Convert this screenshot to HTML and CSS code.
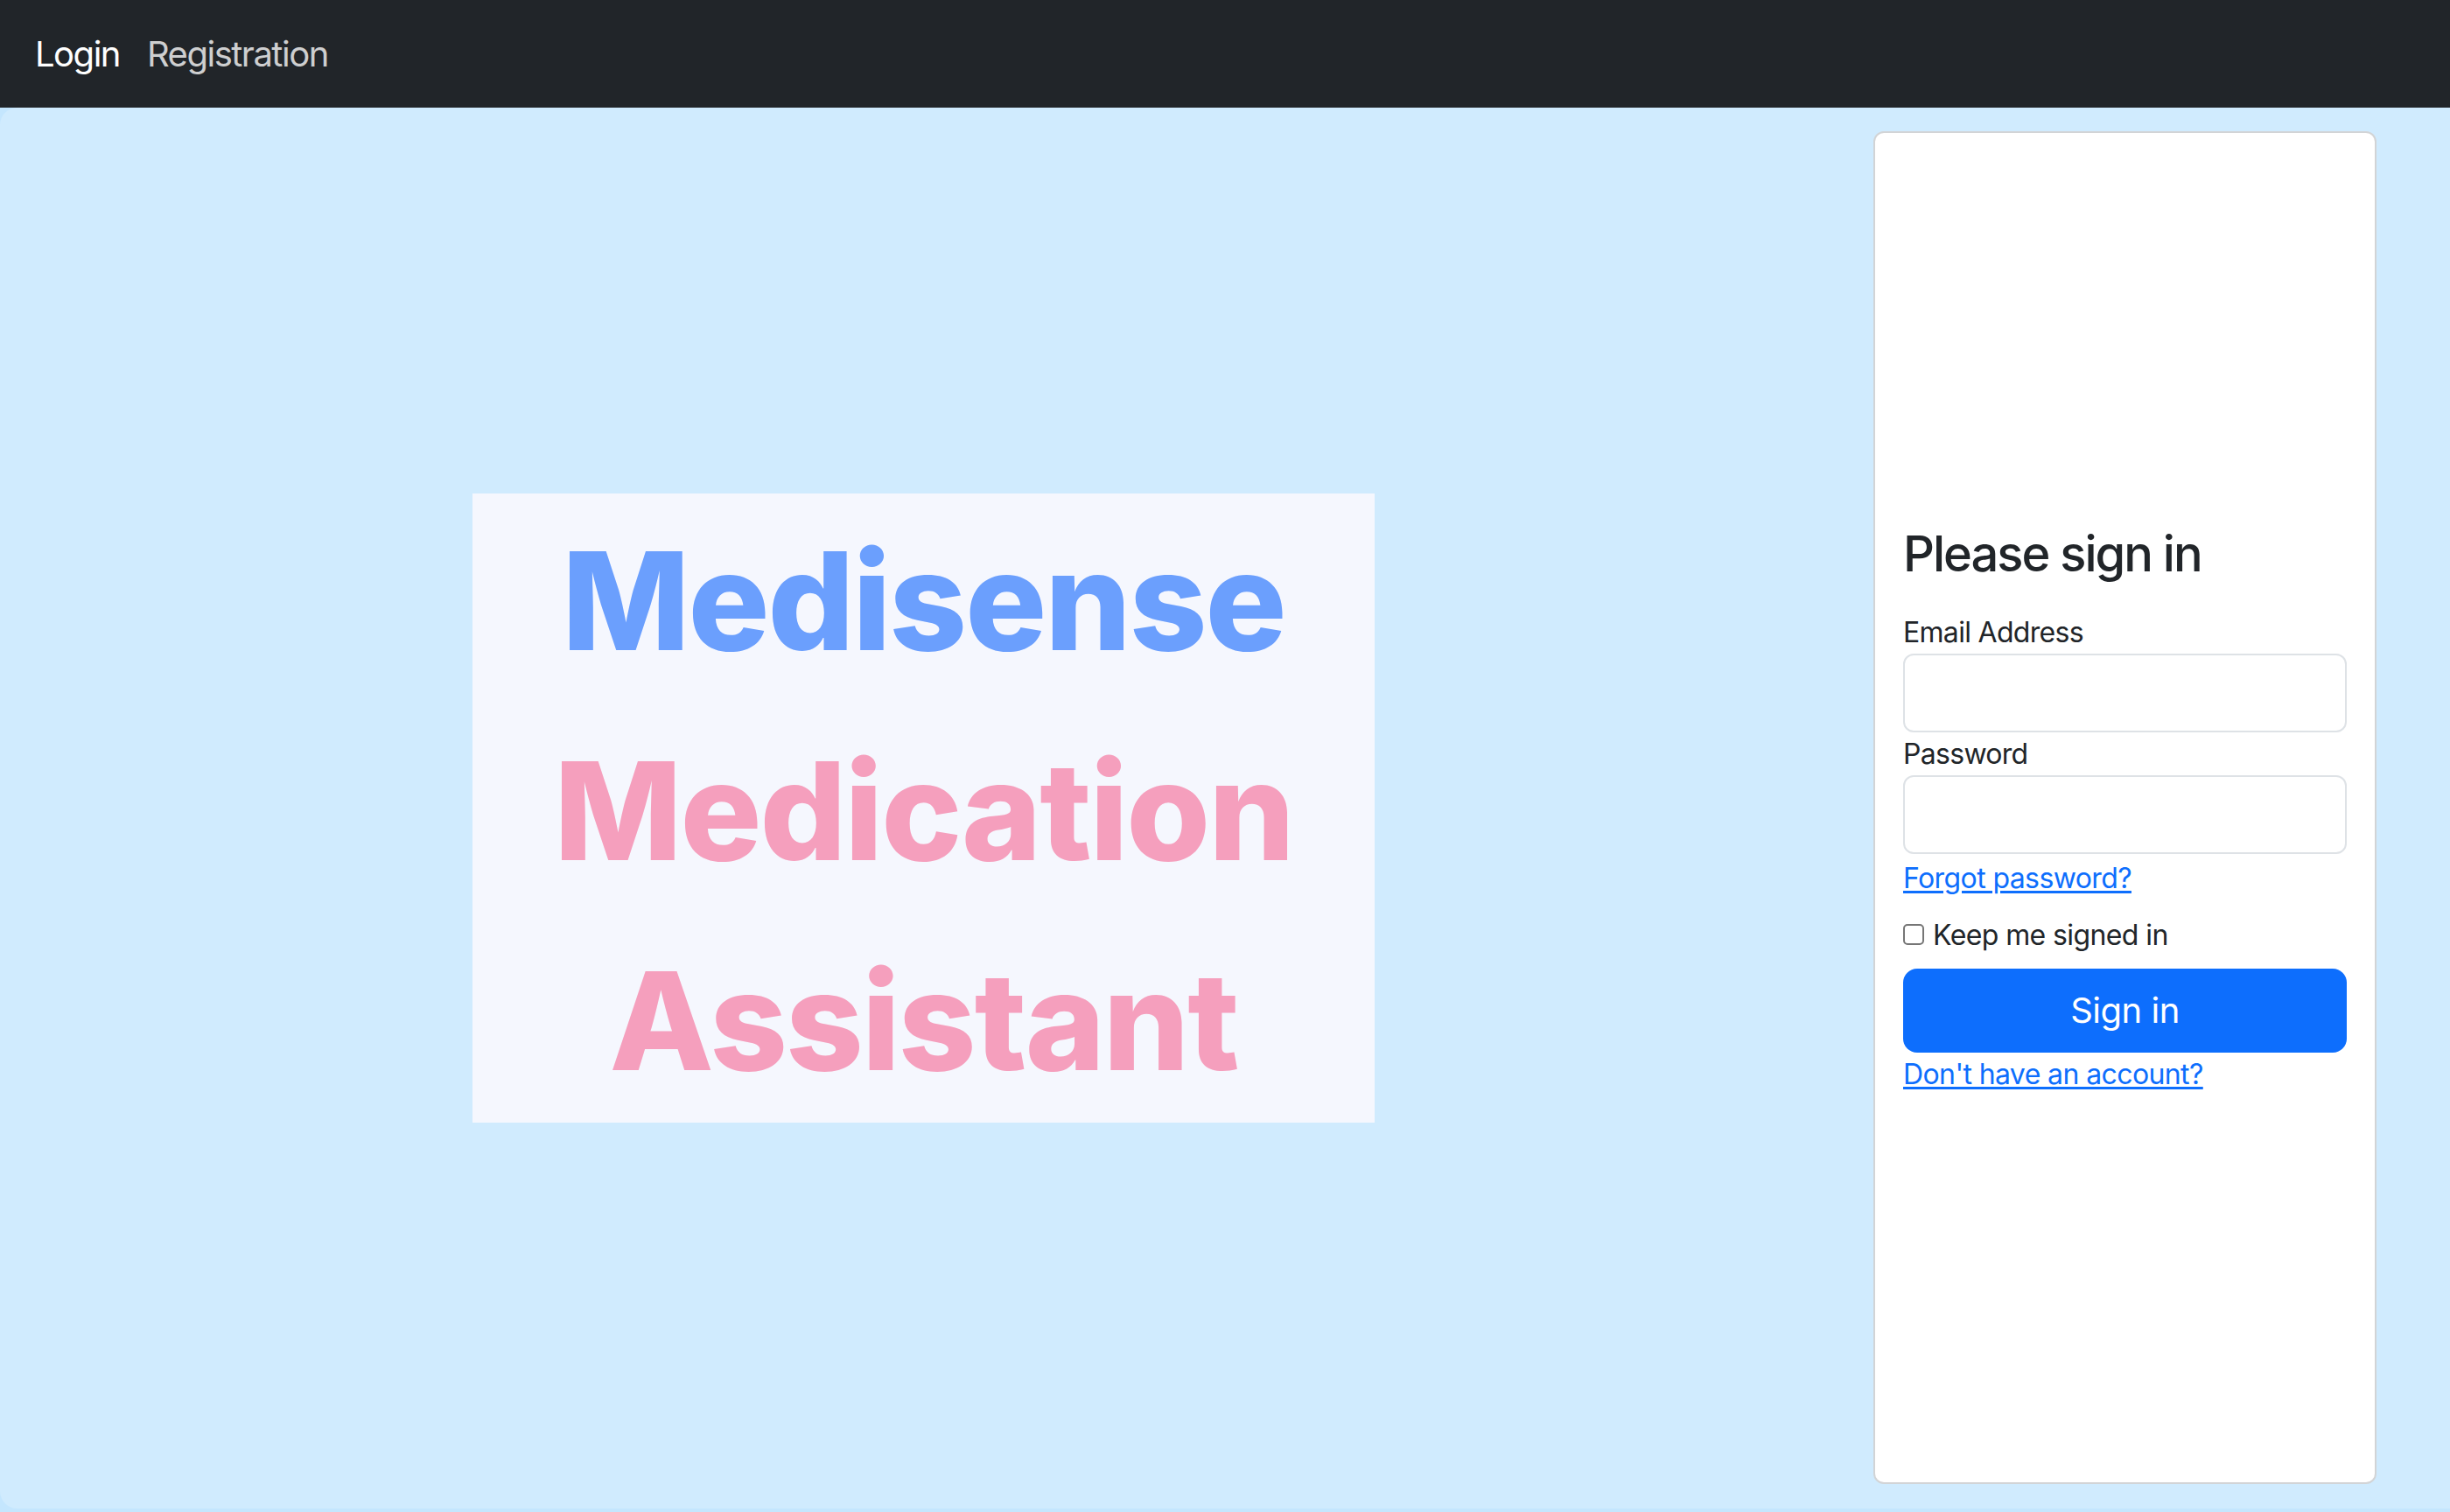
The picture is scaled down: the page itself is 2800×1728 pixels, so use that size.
FILE: index.html
```html
<!DOCTYPE html>
<html lang="en">
<head>
<meta charset="utf-8">
<title>Medisense - Login</title>
<link rel="stylesheet" href="styles.css">
</head>
<body>
<nav class="navbar">
  <a class="nav-link active" href="#">Login</a>
  <a class="nav-link" href="#">Registration</a>
</nav>
<main class="main">
  <section class="hero">
    <div class="logo">
      <div class="logo-line blue">Medisense</div>
      <div class="logo-line pink">Medication</div>
      <div class="logo-line pink">Assistant</div>
    </div>
  </section>
  <aside class="card">
    <form class="signin">
      <h3 class="title">Please sign in</h3>
      <label class="label" for="email">Email Address</label>
      <input class="input" id="email" type="email">
      <label class="label" for="password">Password</label>
      <input class="input" id="password" type="password">
      <a class="link forgot" href="#">Forgot password?</a>
      <div class="check-row">
        <input class="check" id="keep" type="checkbox">
        <label class="check-label" for="keep">Keep me signed in</label>
      </div>
      <button class="btn" type="button">Sign in</button>
      <a class="link signup" href="#">Don't have an account?</a>
    </form>
  </aside>
</main>
</body>
</html>
```
FILE: styles.css
```css
* { box-sizing: border-box; }
html, body { margin: 0; padding: 0; }
body {
  background: #c4e6fe;
  font-family: Inter, "Noto Sans", "Liberation Sans", sans-serif;
  color: #212529;
  height: 1728px;
  overflow: hidden;
}
.navbar {
  height: 123px;
  background: #212529;
  display: flex;
  align-items: center;
  gap: 31px;
  padding-left: 40px;
}
.nav-link {
  font-size: 40px;
  line-height: 48px;
  letter-spacing: -1.5px;
  color: rgba(255, 255, 255, 0.78);
  text-decoration: none;
}
.nav-link.active { color: #ffffff; }

.main {
  height: 1601px;
  background: #d0ebfe;
  border-radius: 20px 0 0 20px;
  display: flex;
}
.hero {
  flex: 0 0 2111px;
  display: flex;
  align-items: center;
  justify-content: center;
}
.logo {
  width: 1031px;
  height: 719px;
  background: #f5f7fe;
  padding-top: 3px;
  overflow: hidden;
}
.logo-line {
  height: 240px;
  font-size: 155px;
  line-height: 240px;
  font-weight: 800;
  letter-spacing: -2px;
  text-align: center;
  white-space: nowrap;
}
.blue { color: #6b9ffd; }
.pink { color: #f59fbd; }

.card {
  flex: 0 0 575px;
  margin: 27px 0 28px 30px;
  background: #ffffff;
  border: 2px solid #d2d4d6;
  border-radius: 12px;
  padding: 6px 32px 0 32px;
  display: flex;
  flex-direction: column;
  justify-content: center;
}
.signin { display: flex; flex-direction: column; align-items: flex-start; }
.title {
  margin: 0 0 32px 0;
  font-size: 56px;
  line-height: 67px;
  font-weight: 500;
  letter-spacing: -2px;
}
.label {
  font-size: 32px;
  line-height: 48px;
  letter-spacing: -0.7px;
  margin: 0;
}
.input {
  width: 100%;
  height: 90px;
  margin: 0 0 1px 0;
  border: 2px solid #dee2e6;
  border-radius: 12px;
  background: #fff;
  font-size: 32px;
  font-family: inherit;
}
.link {
  font-size: 32px;
  line-height: 48px;
  letter-spacing: -0.6px;
  color: #0d6efd;
  text-decoration: underline;
  text-underline-offset: 3px;
}
.forgot { margin-top: 3px; }
.check-row {
  margin-top: 17px;
  display: flex;
  align-items: center;
  height: 48px;
}
.check {
  appearance: none;
  -webkit-appearance: none;
  width: 24px;
  height: 24px;
  margin: 0 10px 0 0;
  border: 2px solid #767676;
  border-radius: 5px;
  background: #fff;
  position: relative;
  top: -1px;
}
.check-label {
  font-size: 32px;
  line-height: 48px;
  letter-spacing: -0.6px;
}
.btn {
  margin-top: 14px;
  width: 100%;
  height: 96px;
  border: none;
  border-radius: 16px;
  background: #0d6efd;
  color: #ffffff;
  font-family: inherit;
  font-size: 40px;
  line-height: 48px;
  font-weight: 400;
  letter-spacing: -0.5px;
}
.signup { margin-top: 1px; }
```
